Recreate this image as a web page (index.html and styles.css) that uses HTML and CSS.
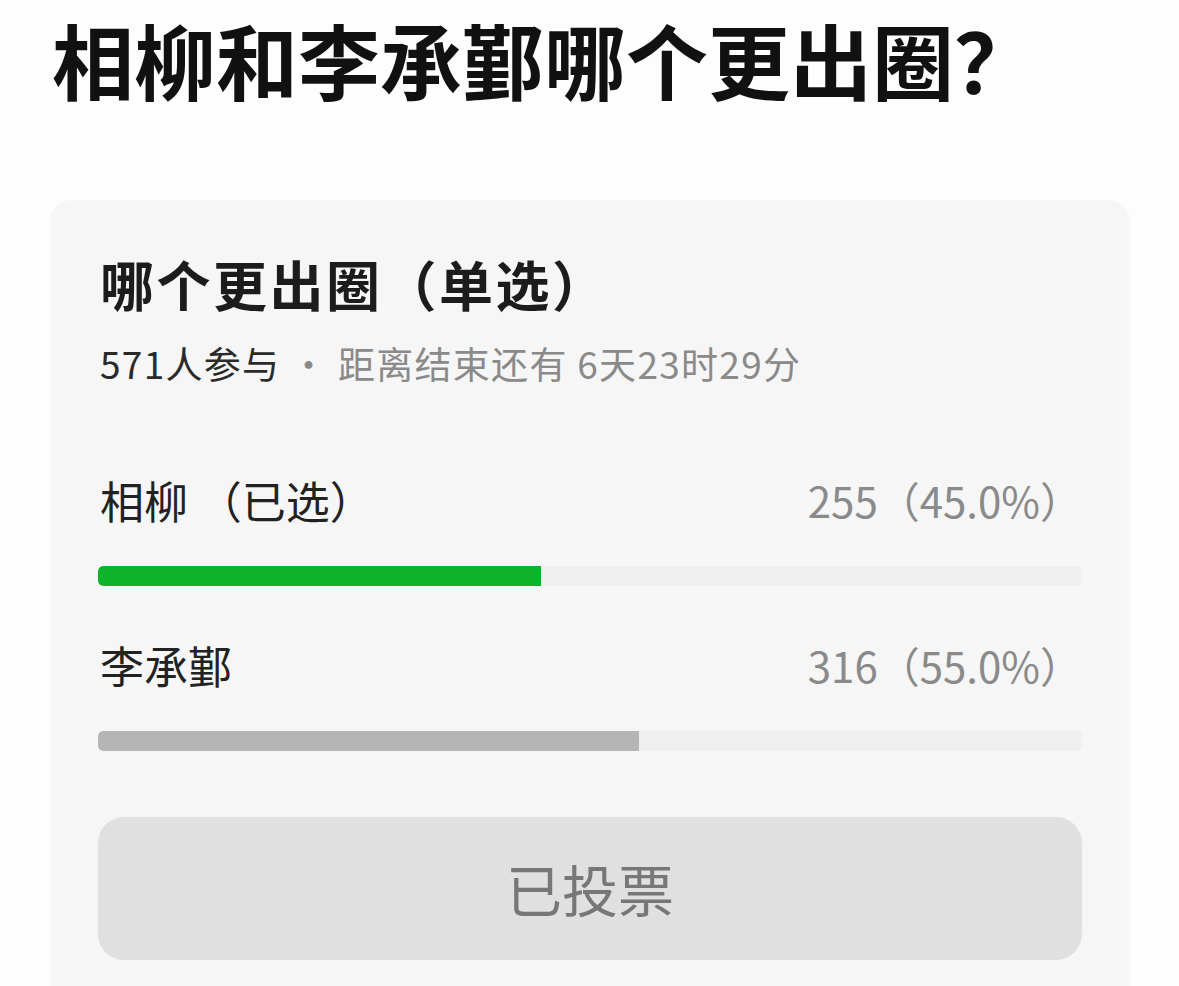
FILE: index.html
```html
<!DOCTYPE html>
<html lang="zh-CN">
<head>
<meta charset="utf-8">
<title>相柳和李承鄞哪个更出圈？</title>
<link rel="stylesheet" href="styles.css">
</head>
<body>
<main class="page">
  <h1 class="title">相柳和李承鄞哪个更出圈？</h1>
  <section class="card">
    <h2 class="card-title">哪个更出圈（单选）</h2>
    <p class="meta"><span class="meta-count">571人参与</span><span class="meta-rest"> · 距离结束还有 6天23时29分</span></p>
    <div class="options">
      <div class="option">
        <div class="option-head">
          <span class="option-name">相柳 （已选）</span>
          <span class="option-count">255（45.0%）</span>
        </div>
        <div class="track"><div class="fill fill-green" style="width:45%"></div></div>
      </div>
      <div class="option">
        <div class="option-head">
          <span class="option-name">李承鄞</span>
          <span class="option-count">316（55.0%）</span>
        </div>
        <div class="track"><div class="fill fill-grey" style="width:55%"></div></div>
      </div>
    </div>
    <button class="vote-btn" type="button">已投票</button>
  </section>
</main>
</body>
</html>
```

FILE: styles.css
```css
html, body {
  margin: 0;
  padding: 0;
  background: #fdfdfd;
}
body {
  font-family: "Noto Sans CJK SC", "Noto Sans", sans-serif;
  color: #1a1a1a;
  overflow: hidden;
}
.page {
  padding: 0 0 0 50px;
  width: 1080px;
}
.title {
  margin: 0;
  padding: 0 0 0 2px;
  font-size: 82px;
  line-height: 118px;
  font-weight: 700;
  color: #111111;
  white-space: nowrap;
}
.card {
  margin-top: 82px;
  background: #f6f6f6;
  border-radius: 22px;
  padding: 48px 48px 40px 48px;
  height: 800px;
}
.card-title {
  margin: 0;
  font-size: 54px;
  line-height: 72px;
  font-weight: 700;
  letter-spacing: 2.5px;
  color: #1c1c1c;
  padding-left: 2px;
}
.meta {
  margin: 18px 0 0 0;
  font-size: 37px;
  line-height: 50px;
  letter-spacing: 1.3px;
  padding-left: 2px;
}
.meta-count { color: #2a2a2a; }
.meta-rest { color: #8a8a8a; }
.options {
  margin-top: 84px;
  display: flex;
  flex-direction: column;
  gap: 51px;
}
.option-head {
  display: flex;
  justify-content: space-between;
  align-items: center;
  padding: 0 0 0 2px;
  line-height: 56px;
}
.option-name {
  font-size: 44px;
  color: #222;
}
.option-count {
  font-size: 42px;
  color: #8a8a8a;
}
.track {
  margin-top: 38px;
  height: 20px;
  background: #efefef;
  border-radius: 5px;
  overflow: hidden;
}
.fill {
  height: 100%;
  border-radius: 5px 0 0 5px;
}
.fill-green { background: #0db42a; }
.fill-grey { background: #b5b5b5; }
.vote-btn {
  display: block;
  margin-top: 66px;
  width: 100%;
  height: 143px;
  border: none;
  border-radius: 26px;
  background: #e0e0e0;
  color: #777777;
  font-family: "Noto Sans CJK SC", "Noto Sans", sans-serif;
  font-size: 56px;
  font-weight: 400;
  padding-bottom: 4px;
}
```
